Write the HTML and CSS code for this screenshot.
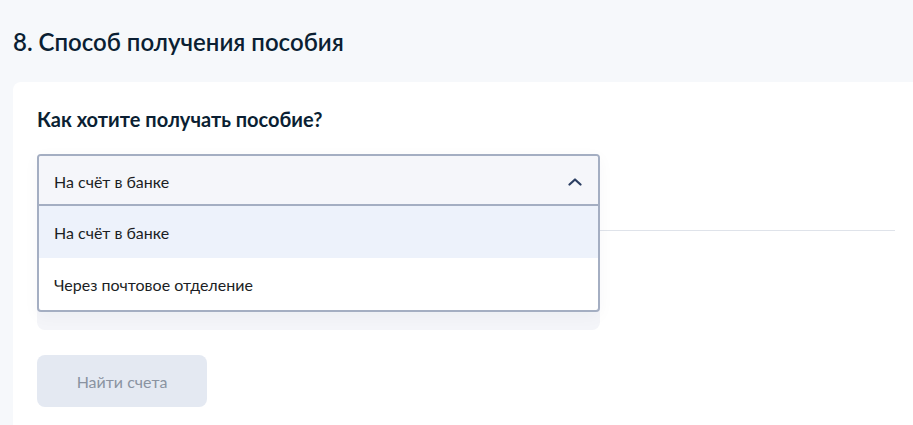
FILE: index.html
```html
<!DOCTYPE html>
<html lang="ru">
<head>
<meta charset="utf-8">
<title>Способ получения пособия</title>
<link rel="stylesheet" href="styles.css">
</head>
<body>
<main class="page">
  <h2 class="section-title">8. Способ получения пособия</h2>
  <section class="card">
    <h3 class="question">Как хотите получать пособие?</h3>
    <div class="field-area">
      <div class="select-base"></div>
      <div class="divider"></div>
      <div class="panel"></div>
      <div class="dropdown">
        <div class="dropdown-head">
          <span>На счёт в банке</span>
          <svg class="chevron" width="14" height="8" viewBox="0 0 14 8" aria-hidden="true">
            <polyline points="1.5,6.5 7,1.5 12.5,6.5" fill="none" stroke="#2b3e62" stroke-width="2.2" stroke-linecap="round" stroke-linejoin="round"/>
          </svg>
        </div>
        <div class="option option-active">На счёт в банке</div>
        <div class="option">Через почтовое отделение</div>
      </div>
    </div>
    <button class="btn" type="button" disabled>Найти счета</button>
  </section>
</main>
</body>
</html>
```
FILE: styles.css
```css
* { box-sizing: border-box; }
html, body { margin: 0; padding: 0; }
body {
  background: #f6f8fb;
  font-family: Lato, "Noto Sans", "Liberation Sans", sans-serif;
  color: #0b1f33;
  overflow: hidden;
}
.page {
  padding: 26px 0 0 13px;
}
.section-title {
  margin: 0;
  font-size: 24px;
  line-height: 32px;
  font-weight: 600;
  color: #0b1f33;
}
.card {
  margin: 24px -6px 0 0;
  background: #ffffff;
  border-radius: 8px 0 0 0;
  padding: 24px 24px 18px 24px;
}
.question {
  margin: 0;
  font-size: 20px;
  line-height: 26px;
  font-weight: 700;
  color: #0b1f33;
}
.field-area {
  position: relative;
  margin-top: 22px;
}
.select-base {
  width: 563px;
  height: 52px;
  background: #f4f5f8;
  border-radius: 4px;
}
.divider {
  margin-top: 24px;
  height: 1px;
  background: #dfe3ea;
}
.panel {
  margin-top: 24px;
  width: 563px;
  height: 75px;
  background: #f4f5f9;
  border-radius: 0 0 8px 8px;
}
.dropdown {
  position: absolute;
  top: 0;
  left: 0;
  width: 563px;
  border: 2px solid #a4aec2;
  border-radius: 4px;
  background: #ffffff;
  overflow: hidden;
  box-shadow: 0 4px 16px rgba(20, 40, 80, 0.04);
}
.dropdown-head {
  height: 50px;
  display: flex;
  align-items: center;
  justify-content: space-between;
  padding: 3px 16px 0 15px;
  background: #f5f6fa;
  border-bottom: 2px solid #a4aec2;
  font-size: 16px;
  color: #1b1e24;
}
.chevron { display: block; }
.option {
  height: 52px;
  display: flex;
  align-items: center;
  padding: 0 15px;
  font-size: 16px;
  color: #1b1e24;
}
.option-active {
  background: #edf2fb;
}
.btn {
  display: block;
  margin-top: 25px;
  width: 170px;
  height: 52px;
  border: 0;
  border-radius: 8px;
  background: #e4e9f2;
  color: #8a93a1;
  font-family: Lato, "Noto Sans", "Liberation Sans", sans-serif;
  font-size: 16px;
  cursor: default;
}
```
